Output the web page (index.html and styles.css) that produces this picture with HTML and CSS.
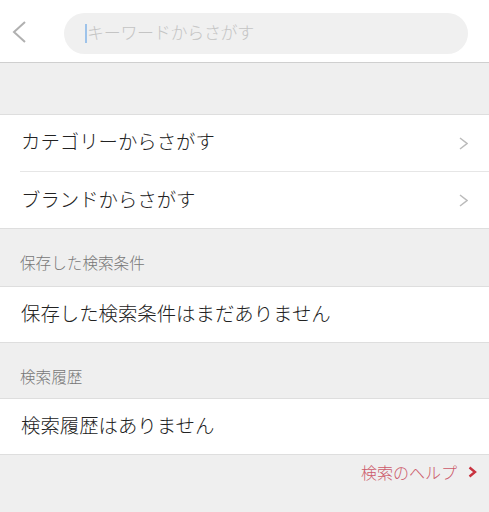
FILE: index.html
```html
<!DOCTYPE html>
<html lang="ja">
<head>
  <meta charset="UTF-8">
  <meta name="viewport" content="width=device-width, initial-scale=1.0">
  <title>さがす</title>
  <link rel="stylesheet" href="styles.css">
</head>
<body>
  <header class="search-header">
    <a class="back" href="#">
      <svg width="14" height="22" viewBox="0 0 14 22"><polyline points="13,1 2,11 13,21" fill="none" stroke="#b0b0b0" stroke-width="2"/></svg>
    </a>
    <div class="search-box">
      <span class="caret"></span><span class="placeholder">キーワードからさがす</span>
    </div>
  </header>

  <div class="spacer"></div>

  <ul class="menu">
    <li class="menu-item">
      <span>カテゴリーからさがす</span>
      <svg width="9" height="13" viewBox="0 0 9 13"><polyline points="1,1 8,6.5 1,12" fill="none" stroke="#bbb" stroke-width="1.5"/></svg>
    </li>
    <li class="menu-item">
      <span>ブランドからさがす</span>
      <svg width="9" height="13" viewBox="0 0 9 13"><polyline points="1,1 8,6.5 1,12" fill="none" stroke="#bbb" stroke-width="1.5"/></svg>
    </li>
  </ul>

  <div class="section-title first">保存した検索条件</div>
  <div class="empty-row">保存した検索条件はまだありません</div>

  <div class="section-title">検索履歴</div>
  <div class="empty-row">検索履歴はありません</div>

  <div class="help">
    <a href="#">検索のヘルプ
      <svg width="9" height="12" viewBox="0 0 9 12"><polyline points="1.5,1.5 7,6 1.5,10.5" fill="none" stroke="#c8323f" stroke-width="2.4"/></svg>
    </a>
  </div>
</body>
</html>
```

FILE: styles.css
```css
body {
  margin: 0;
  background: #efefef;
  font-family: "Noto Sans CJK JP", "Noto Sans", sans-serif;
  font-weight: 300;
  color: #222;
}

.search-header {
  display: flex;
  align-items: center;
  height: 62px;
  padding: 0 21px 0 12px;
  background: #fff;
  border-bottom: 1px solid #cfcfcf;
}

.back {
  display: flex;
  width: 52px;
  padding-top: 1px;
}

.search-box {
  flex: 1;
  display: flex;
  align-items: center;
  height: 41px;
  margin-top: 4px;
  padding-left: 21px;
  background: #f0f0f0;
  border-radius: 21px;
}

.caret {
  width: 2px;
  height: 19px;
  background: #9ec3ea;
}

.placeholder {
  font-size: 17px;
  color: #c4c4c4;
  letter-spacing: -0.3px;
  padding-bottom: 3px;
}

.spacer {
  height: 51px;
  border-bottom: 1px solid #dedede;
}

.menu {
  list-style: none;
  margin: 0;
  padding: 0 0 0 20px;
  background: #fff;
  border-bottom: 1px solid #dedede;
}

.menu-item {
  display: flex;
  align-items: center;
  justify-content: space-between;
  height: 56px;
  padding: 0 21px 0 1px;
  font-size: 19.4px;
}

.menu-item span {
  padding-bottom: 5px;
}

.menu-item + .menu-item {
  border-top: 1px solid #e6e6e6;
}

.menu-item + .menu-item span {
  padding-bottom: 3px;
}

.section-title {
  height: 56px;
  box-sizing: border-box;
  padding: 22px 20px 0;
  font-size: 15.6px;
  line-height: 22px;
  color: #777;
  border-bottom: 1px solid #dedede;
}

.section-title.first {
  height: 58px;
  padding-top: 22px;
}

.empty-row {
  display: flex;
  align-items: center;
  box-sizing: border-box;
  height: 56px;
  padding: 0 0 4px 21px;
  font-size: 19.4px;
  background: #fff;
  border-bottom: 1px solid #dedede;
}

.help {
  display: flex;
  justify-content: flex-end;
  padding: 5px 12px 0 0;
}

.help a {
  display: flex;
  align-items: center;
  gap: 11px;
  font-size: 16px;
  color: #cc5a6a;
  text-decoration: none;
}
```
